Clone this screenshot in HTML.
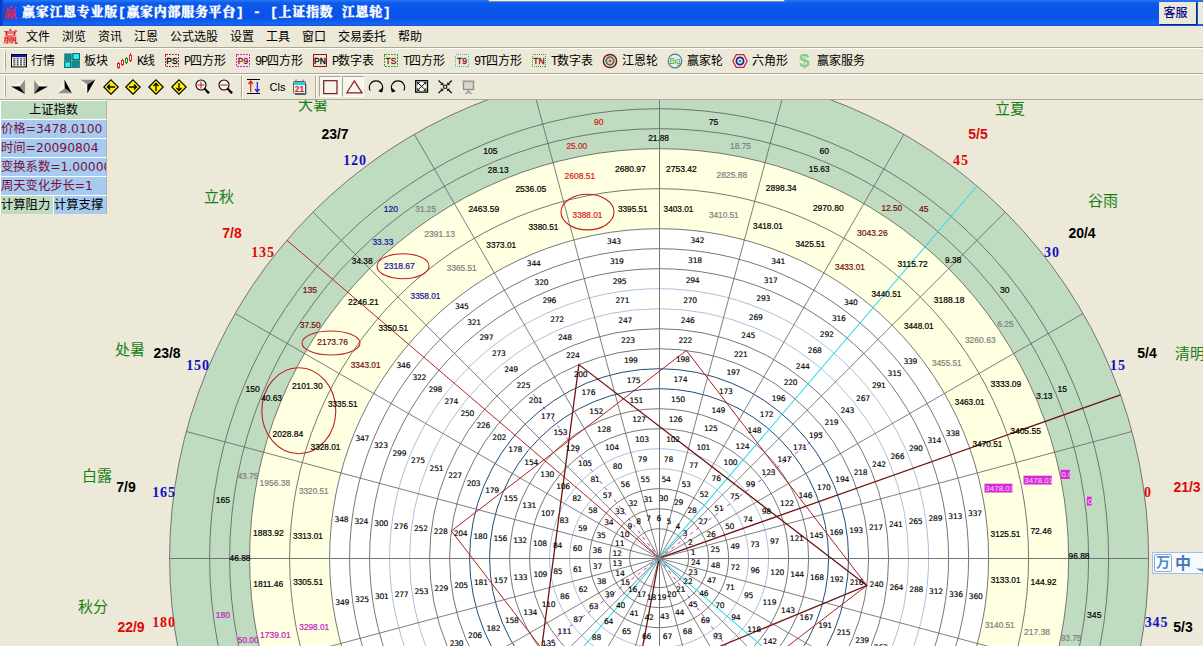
<!DOCTYPE html>
<html lang="zh-CN"><head><meta charset="utf-8"><title>赢家江恩专业版</title>
<style>
html,body{margin:0;padding:0}
body{width:1203px;height:646px;overflow:hidden;background:#ece9d8;position:relative;font-family:"Liberation Sans","Noto Sans CJK SC",sans-serif;font-size:12px;color:#000}
#wheel{position:absolute;left:0;top:100px;font-family:"Liberation Sans","Noto Sans CJK SC",sans-serif}
.abs,#ui *{position:absolute}
#ui{position:absolute;left:0;top:0;width:1203px;height:100px}
#title{left:0;top:0;width:1203px;height:26px;background:linear-gradient(#2a78f4 0,#0c5cee 3px,#0a55ea 8px,#0a52e6 18px,#1260ee 22px,#1a66f0 24px,#0f50dc 26px)}
#title .t{left:22px;top:5px;color:#fff;font-weight:900;-webkit-text-stroke:0.3px #fff;font-size:13px;line-height:15px;font-family:"Liberation Mono","Noto Serif CJK SC",serif;white-space:nowrap;letter-spacing:0.7px}
#title .ic,#menu .ic{left:3px;width:16px;height:16px;font-size:14px;line-height:16px;color:#d01830;font-family:"Liberation Serif","Noto Serif CJK SC",serif;font-weight:bold}
#tab{left:488px;top:0;width:297px;height:2px;background:#eef0f4;border:1px solid #7a8aa8;border-top:none;box-sizing:border-box;border-radius:0 0 3px 3px}
#kf{left:1159px;top:2px;width:37px;height:22px;background:#ece9d8;box-shadow:1px 1px 0 #0a2a80;color:#0a0a90;font-size:12px;line-height:22px;text-align:center;text-indent:-4px;font-weight:500}
#kf2{left:1198px;top:2px;width:8px;height:22px;background:#ece9d8}
#menu{left:0;top:26px;width:1203px;height:21px;background:#ece9d8}
#menu span{top:4px;font-size:12px;line-height:14px;white-space:nowrap}
.sep{left:0;width:1203px;height:1px}
.tb span{font-size:12px;line-height:14px;white-space:nowrap;top:5px}
#ui .tb span i{position:static;font-style:normal;font-family:"Liberation Mono",monospace;letter-spacing:-1.2px}
.grip{left:4px;width:1px;background:#fff;box-shadow:1px 0 0 #aca899}
#panel div{box-sizing:border-box;white-space:nowrap;overflow:hidden;font-size:12.3px;line-height:17px;padding-top:1px;font-family:"DejaVu Sans","Noto Sans CJK SC",sans-serif;padding-left:0}
</style></head><body>
<svg id="wheel" width="1203" height="546" viewBox="0 100 1203 546">
<circle cx="659.1" cy="558.2" r="489.5" fill="#c0dcc0"/>
<circle cx="659.1" cy="558.2" r="409.5" fill="#ffffe1"/>
<circle cx="659.1" cy="558.2" r="329.5" fill="#ffffff"/>
<g fill="none" stroke="#686868" stroke-width="0.9">
<circle cx="659.1" cy="558.2" r="29.5"/>
<circle cx="659.1" cy="558.2" r="49.5"/>
<circle cx="659.1" cy="558.2" r="69.5"/>
<circle cx="659.1" cy="558.2" r="89.5" stroke="#a9c1dd" stroke-width="1"/>
<circle cx="659.1" cy="558.2" r="109.5" stroke="#a9c1dd" stroke-width="1"/>
<circle cx="659.1" cy="558.2" r="129.5"/>
<circle cx="659.1" cy="558.2" r="149.5"/>
<circle cx="659.1" cy="558.2" r="169.5" stroke="#1f4e79" stroke-width="1"/>
<circle cx="659.1" cy="558.2" r="189.5" stroke="#1f4e79" stroke-width="1"/>
<circle cx="659.1" cy="558.2" r="209.5"/>
<circle cx="659.1" cy="558.2" r="229.5"/>
<circle cx="659.1" cy="558.2" r="249.5" stroke="#a9c1dd" stroke-width="1"/>
<circle cx="659.1" cy="558.2" r="269.5" stroke="#a9c1dd" stroke-width="1"/>
<circle cx="659.1" cy="558.2" r="289.5"/>
<circle cx="659.1" cy="558.2" r="309.5"/>
<circle cx="659.1" cy="558.2" r="329.5"/>
<circle cx="659.1" cy="558.2" r="369.5"/>
<circle cx="659.1" cy="558.2" r="409.5"/>
<circle cx="659.1" cy="558.2" r="429.5"/>
<circle cx="659.1" cy="558.2" r="449.5"/>
<circle cx="659.1" cy="558.2" r="489.5"/>
<path d="M659.1 558.2L1131.9 431.5M659.1 558.2L1083 313.5M659.1 558.2L1005.2 212.1M659.1 558.2L903.9 134.3M659.1 558.2L785.8 85.4M659.1 558.2L532.4 85.4M659.1 558.2L414.4 134.3M659.1 558.2L313 212.1M659.1 558.2L235.2 313.5M659.1 558.2L186.3 431.5M659.1 558.2L186.3 684.9M659.1 558.2L235.2 803M659.1 558.2L313 904.3M659.1 558.2L414.3 982.1M659.1 558.2L532.4 1031M659.1 558.2L785.8 1031M659.1 558.2L903.9 982.1M659.1 558.2L1005.2 904.3M659.1 558.2L1083 803M659.1 558.2L1131.9 684.9" stroke-width="0.85"/>
</g>
<path d="M169 558.5H1149M659.5 68V700" stroke="#757575" stroke-width="1" shape-rendering="crispEdges" fill="none"/>
<line x1="659.1" y1="558.2" x2="825.3" y2="430.7" stroke="#b040d0" stroke-width="1.0" stroke-dasharray="3.6 4.2"/>
<line x1="659.1" y1="558.2" x2="531.6" y2="392" stroke="#b040d0" stroke-width="1.0" stroke-dasharray="3.6 4.2"/>
<line x1="659.1" y1="558.2" x2="492.9" y2="685.7" stroke="#b040d0" stroke-width="1.0" stroke-dasharray="3.6 4.2"/>
<line x1="659.1" y1="558.2" x2="786.6" y2="724.4" stroke="#b040d0" stroke-width="1.0" stroke-dasharray="3.6 4.2"/>
<line x1="659.1" y1="558.2" x2="977" y2="186" stroke="#30dcea" stroke-width="1.05" />
<line x1="659.1" y1="558.2" x2="341.2" y2="930.4" stroke="#30dcea" stroke-width="1.05" />
<line x1="659.1" y1="558.2" x2="1031.3" y2="876.1" stroke="#30dcea" stroke-width="1.05" />
<line x1="659.1" y1="558.2" x2="1120.5" y2="394.8" stroke="#701414" stroke-width="1.3" />
<line x1="659.1" y1="558.2" x2="569.9" y2="1039.5" stroke="#701414" stroke-width="1.3" />
<line x1="659.1" y1="558.2" x2="286.9" y2="240.3" stroke="#b82424" stroke-width="1.0" />
<polygon points="866.8,585.5 686.4,350.5 451.4,530.9 631.8,765.9" fill="none" stroke="#ac2020" stroke-width="1.0"/>
<polygon points="866.8,585.5 578.9,364.6 531.6,724.4" fill="none" stroke="#701414" stroke-width="1.3"/>
<circle cx="659.1" cy="558.2" r="2.6" fill="#808080"/>
<ellipse cx="331" cy="343" rx="29" ry="12" fill="none" stroke="#c02020" stroke-width="1.1"/>
<ellipse cx="298.8" cy="410.7" rx="37" ry="43" fill="none" stroke="#c02020" stroke-width="1.1"/>
<ellipse cx="403" cy="266.2" rx="26" ry="12.5" fill="none" stroke="#c02020" stroke-width="1.1"/>
<ellipse cx="587.5" cy="212.1" rx="26.5" ry="17.8" fill="none" stroke="#c02020" stroke-width="1.1"/>
<g font-size="7.6" font-family="'DejaVu Sans','Liberation Sans',sans-serif" fill="#000" stroke="#000" stroke-width="0.15" letter-spacing="-0.25">
<text x="690.8" y="554.9">1</text>
<text x="688.1" y="545">2</text>
<text x="682.8" y="536.1">3</text>
<text x="675.5" y="528.8">4</text>
<text x="666.5" y="523.8">5</text>
<text x="656.5" y="521.2">6</text>
<text x="646.2" y="521.3">7</text>
<text x="636.3" y="524">8</text>
<text x="627.4" y="529.3">9</text>
<text x="620.1" y="536.6">10</text>
<text x="615.1" y="545.6">11</text>
<text x="612.5" y="555.6">12</text>
<text x="612.6" y="565.9">13</text>
<text x="615.3" y="575.8">14</text>
<text x="620.6" y="584.7">15</text>
<text x="627.9" y="592">16</text>
<text x="636.9" y="597">17</text>
<text x="646.9" y="599.6">18</text>
<text x="657.2" y="599.5">19</text>
<text x="667.1" y="596.8">20</text>
<text x="676" y="591.5">21</text>
<text x="683.3" y="584.2">22</text>
<text x="688.3" y="575.2">23</text>
<text x="690.9" y="565.2">24</text>
<text x="710.6" y="552.1">25</text>
<text x="706.5" y="537.1">26</text>
<text x="698.6" y="523.8">27</text>
<text x="687.5" y="512.9">28</text>
<text x="674" y="505.2">29</text>
<text x="658.9" y="501.3">30</text>
<text x="643.4" y="501.5">31</text>
<text x="628.4" y="505.6">32</text>
<text x="615.1" y="513.5">33</text>
<text x="604.2" y="524.6">34</text>
<text x="596.5" y="538.1">35</text>
<text x="592.6" y="553.2">36</text>
<text x="592.8" y="568.7">37</text>
<text x="596.9" y="583.7">38</text>
<text x="604.8" y="597">39</text>
<text x="615.9" y="607.9">40</text>
<text x="629.4" y="615.6">41</text>
<text x="644.5" y="619.5">42</text>
<text x="660" y="619.3">43</text>
<text x="675" y="615.2">44</text>
<text x="688.3" y="607.3">45</text>
<text x="699.2" y="596.2">46</text>
<text x="706.9" y="582.7">47</text>
<text x="710.8" y="567.6">48</text>
<text x="730.4" y="549.3">49</text>
<text x="724.9" y="529.3">50</text>
<text x="714.3" y="511.4">51</text>
<text x="699.5" y="496.9">52</text>
<text x="681.5" y="486.7">53</text>
<text x="661.4" y="481.5">54</text>
<text x="640.6" y="481.7">55</text>
<text x="620.6" y="487.2">56</text>
<text x="602.7" y="497.8">57</text>
<text x="588.2" y="512.6">58</text>
<text x="578" y="530.6">59</text>
<text x="572.8" y="550.7">60</text>
<text x="573" y="571.5">61</text>
<text x="578.5" y="591.5">62</text>
<text x="589.1" y="609.4">63</text>
<text x="603.9" y="623.9">64</text>
<text x="621.9" y="634.1">65</text>
<text x="642" y="639.3">66</text>
<text x="662.8" y="639.1">67</text>
<text x="682.8" y="633.6">68</text>
<text x="700.7" y="623">69</text>
<text x="715.2" y="608.2">70</text>
<text x="725.4" y="590.2">71</text>
<text x="730.6" y="570.1">72</text>
<text x="750.2" y="546.5">73</text>
<text x="743.3" y="521.5">74</text>
<text x="730.1" y="499.1">75</text>
<text x="711.6" y="480.9">76</text>
<text x="688.9" y="468.1">77</text>
<text x="663.8" y="461.6">78</text>
<text x="637.8" y="461.9">79</text>
<text x="612.8" y="468.8">80</text>
<text x="590.4" y="482">81</text>
<text x="572.2" y="500.5">82</text>
<text x="559.4" y="523.2">83</text>
<text x="552.9" y="548.3">84</text>
<text x="553.2" y="574.3">85</text>
<text x="560.1" y="599.3">86</text>
<text x="573.3" y="621.7">87</text>
<text x="591.8" y="639.9">88</text>
<text x="614.5" y="652.7">89</text>
<text x="639.6" y="659.2">90</text>
<text x="665.6" y="658.9">91</text>
<text x="690.6" y="652">92</text>
<text x="713" y="638.8">93</text>
<text x="731.2" y="620.3">94</text>
<text x="744" y="597.6">95</text>
<text x="750.5" y="572.5">96</text>
<text x="770" y="543.7">97</text>
<text x="761.7" y="513.7">98</text>
<text x="745.8" y="486.8">99</text>
<text x="723.6" y="464.9">100</text>
<text x="696.4" y="449.6">101</text>
<text x="666.2" y="441.8">102</text>
<text x="635" y="442.1">103</text>
<text x="605" y="450.4">104</text>
<text x="578.1" y="466.3">105</text>
<text x="556.2" y="488.5">106</text>
<text x="540.9" y="515.7">107</text>
<text x="533.1" y="545.9">108</text>
<text x="533.4" y="577.1">109</text>
<text x="541.7" y="607.1">110</text>
<text x="557.6" y="634">111</text>
<text x="579.8" y="655.9">112</text>
<text x="725.3" y="654.5">117</text>
<text x="747.2" y="632.3">118</text>
<text x="762.5" y="605.1">119</text>
<text x="770.3" y="574.9">120</text>
<text x="789.8" y="540.9">121</text>
<text x="780.1" y="505.8">122</text>
<text x="761.6" y="474.5">123</text>
<text x="735.6" y="449">124</text>
<text x="703.9" y="431">125</text>
<text x="668.7" y="421.9">126</text>
<text x="632.2" y="422.3">127</text>
<text x="597.1" y="432">128</text>
<text x="565.8" y="450.5">129</text>
<text x="540.3" y="476.5">130</text>
<text x="522.3" y="508.2">131</text>
<text x="513.2" y="543.4">132</text>
<text x="513.6" y="579.9">133</text>
<text x="523.3" y="615">134</text>
<text x="541.8" y="646.3">135</text>
<text x="763.1" y="644.3">142</text>
<text x="781.1" y="612.6">143</text>
<text x="790.2" y="577.4">144</text>
<text x="809.6" y="538.1">145</text>
<text x="798.5" y="498">146</text>
<text x="777.4" y="462.2">147</text>
<text x="747.6" y="433">148</text>
<text x="711.4" y="412.5">149</text>
<text x="671.1" y="402.1">150</text>
<text x="629.4" y="402.5">151</text>
<text x="589.3" y="413.6">152</text>
<text x="553.5" y="434.7">153</text>
<text x="524.3" y="464.5">154</text>
<text x="503.8" y="500.7">155</text>
<text x="493.4" y="541">156</text>
<text x="493.8" y="582.7">157</text>
<text x="504.9" y="622.8">158</text>
<text x="526" y="658.6">159</text>
<text x="779.1" y="656.3">166</text>
<text x="799.6" y="620.1">167</text>
<text x="810" y="579.8">168</text>
<text x="829.4" y="535.4">169</text>
<text x="816.9" y="490.2">170</text>
<text x="793.1" y="449.8">171</text>
<text x="759.7" y="417">172</text>
<text x="718.9" y="393.9">173</text>
<text x="673.5" y="382.2">174</text>
<text x="626.7" y="382.7">175</text>
<text x="581.5" y="395.2">176</text>
<text x="541.1" y="419">177</text>
<text x="508.3" y="452.4">178</text>
<text x="485.2" y="493.2">179</text>
<text x="473.5" y="538.6">180</text>
<text x="474" y="585.4">181</text>
<text x="486.5" y="630.6">182</text>
<text x="818.2" y="627.6">191</text>
<text x="829.9" y="582.2">192</text>
<text x="849.2" y="532.6">193</text>
<text x="835.3" y="482.4">194</text>
<text x="808.9" y="437.5">195</text>
<text x="771.7" y="401">196</text>
<text x="726.4" y="375.4">197</text>
<text x="675.9" y="362.4">198</text>
<text x="623.9" y="362.9">199</text>
<text x="573.7" y="376.8">200</text>
<text x="528.8" y="403.2">201</text>
<text x="492.3" y="440.4">202</text>
<text x="466.7" y="485.7">203</text>
<text x="453.7" y="536.2">204</text>
<text x="454.2" y="588.2">205</text>
<text x="468.1" y="638.4">206</text>
<text x="836.7" y="635.1">215</text>
<text x="849.7" y="584.6">216</text>
<text x="869.1" y="529.8">217</text>
<text x="853.7" y="474.6">218</text>
<text x="824.6" y="425.2">219</text>
<text x="783.7" y="385.1">220</text>
<text x="733.9" y="356.9">221</text>
<text x="678.4" y="342.5">222</text>
<text x="621.1" y="343">223</text>
<text x="565.9" y="358.4">224</text>
<text x="516.5" y="387.5">225</text>
<text x="476.4" y="428.4">226</text>
<text x="448.2" y="478.2">227</text>
<text x="433.8" y="533.7">228</text>
<text x="434.3" y="591">229</text>
<text x="449.7" y="646.2">230</text>
<text x="855.2" y="642.6">239</text>
<text x="869.6" y="587.1">240</text>
<text x="888.9" y="527">241</text>
<text x="872.1" y="466.7">242</text>
<text x="840.4" y="412.9">243</text>
<text x="795.8" y="369.1">244</text>
<text x="741.3" y="338.3">245</text>
<text x="680.8" y="322.7">246</text>
<text x="618.3" y="323.2">247</text>
<text x="558" y="340">248</text>
<text x="504.2" y="371.7">249</text>
<text x="460.4" y="416.3">250</text>
<text x="429.6" y="470.8">251</text>
<text x="414" y="531.3">252</text>
<text x="414.5" y="593.8">253</text>
<text x="431.3" y="654.1">254</text>
<text x="873.8" y="650">263</text>
<text x="889.4" y="589.5">264</text>
<text x="908.7" y="524.2">265</text>
<text x="890.5" y="458.9">266</text>
<text x="856.1" y="400.6">267</text>
<text x="807.8" y="353.1">268</text>
<text x="748.8" y="319.8">269</text>
<text x="683.2" y="302.8">270</text>
<text x="615.5" y="303.4">271</text>
<text x="550.2" y="321.6">272</text>
<text x="491.9" y="356">273</text>
<text x="444.4" y="404.3">274</text>
<text x="411.1" y="463.3">275</text>
<text x="394.1" y="528.9">276</text>
<text x="394.7" y="596.6">277</text>
<text x="892.3" y="657.5">287</text>
<text x="909.3" y="591.9">288</text>
<text x="928.5" y="521.4">289</text>
<text x="908.9" y="451.1">290</text>
<text x="871.9" y="388.2">291</text>
<text x="819.8" y="337.1">292</text>
<text x="756.3" y="301.2">293</text>
<text x="685.7" y="283">294</text>
<text x="612.7" y="283.6">295</text>
<text x="542.4" y="303.2">296</text>
<text x="479.5" y="340.2">297</text>
<text x="428.4" y="392.3">298</text>
<text x="392.5" y="455.8">299</text>
<text x="374.3" y="526.4">300</text>
<text x="374.9" y="599.4">301</text>
<text x="929.1" y="594.4">312</text>
<text x="948.3" y="518.6">313</text>
<text x="927.4" y="443.3">314</text>
<text x="887.6" y="375.9">315</text>
<text x="831.9" y="321.1">316</text>
<text x="763.8" y="282.7">317</text>
<text x="688.1" y="263.1">318</text>
<text x="609.9" y="263.8">319</text>
<text x="534.6" y="284.7">320</text>
<text x="467.2" y="324.5">321</text>
<text x="412.4" y="380.2">322</text>
<text x="374" y="448.3">323</text>
<text x="354.4" y="524">324</text>
<text x="355.1" y="602.2">325</text>
<text x="949" y="596.8">336</text>
<text x="968.1" y="515.8">337</text>
<text x="945.8" y="435.5">338</text>
<text x="903.4" y="363.6">339</text>
<text x="843.9" y="305.2">340</text>
<text x="771.3" y="264.1">341</text>
<text x="690.5" y="243.3">342</text>
<text x="607.1" y="244">343</text>
<text x="526.8" y="266.3">344</text>
<text x="454.9" y="308.7">345</text>
<text x="396.5" y="368.2">346</text>
<text x="355.4" y="440.8">347</text>
<text x="334.6" y="521.6">348</text>
<text x="335.3" y="605">349</text>
<text x="968.8" y="599.2">360</text>
</g>
<g font-size="8" fill="currentColor" stroke="currentColor" stroke-width="0.2">
<text x="972.5" y="447.3" font-size="8.25" color="#000">3470.51</text>
<text x="1010.2" y="434.1" font-size="8.5" color="#000">3405.55</text>
<text x="954.8" y="405.1" font-size="8.25" color="#000">3463.01</text>
<text x="990.6" y="387.1" font-size="8.5" color="#000">3333.09</text>
<text x="931.9" y="365.6" font-size="8.25" color="#808080">3455.51</text>
<text x="964.9" y="343.1" font-size="8.5" color="#808080">3260.63</text>
<text x="903.9" y="329.4" font-size="8.25" color="#000">3448.01</text>
<text x="933.8" y="302.8" font-size="8.5" color="#000">3188.18</text>
<text x="871.5" y="297.2" font-size="8.25" color="#000">3440.51</text>
<text x="897.6" y="266.9" font-size="8.5" color="#000">3115.72</text>
<text x="835.1" y="269.5" font-size="8.25" color="#701010">3433.01</text>
<text x="857.1" y="236" font-size="8.5" color="#701010">3043.26</text>
<text x="795.4" y="246.8" font-size="8.25" color="#000">3425.51</text>
<text x="812.9" y="210.6" font-size="8.5" color="#000">2970.80</text>
<text x="753.1" y="229.4" font-size="8.25" color="#000">3418.01</text>
<text x="765.8" y="191.3" font-size="8.5" color="#000">2898.34</text>
<text x="708.9" y="217.7" font-size="8.25" color="#808080">3410.51</text>
<text x="716.5" y="178.3" font-size="8.5" color="#808080">2825.88</text>
<text x="663.6" y="211.9" font-size="8.25" color="#000">3403.01</text>
<text x="666" y="171.8" font-size="8.5" color="#000">2753.42</text>
<text x="617.9" y="212.1" font-size="8.25" color="#000">3395.51</text>
<text x="615" y="172" font-size="8.5" color="#000">2680.97</text>
<text x="572.6" y="218.2" font-size="8.25" color="#d81a1a">3388.01</text>
<text x="564.5" y="178.8" font-size="8.5" color="#d81a1a">2608.51</text>
<text x="528.5" y="230.2" font-size="8.25" color="#000">3380.51</text>
<text x="515.4" y="192.1" font-size="8.5" color="#000">2536.05</text>
<text x="486.3" y="247.8" font-size="8.25" color="#000">3373.01</text>
<text x="468.4" y="211.8" font-size="8.5" color="#000">2463.59</text>
<text x="446.8" y="270.8" font-size="8.25" color="#808080">3365.51</text>
<text x="424.3" y="237.4" font-size="8.5" color="#808080">2391.13</text>
<text x="410.6" y="298.7" font-size="8.25" color="#12129c">3358.01</text>
<text x="384" y="268.6" font-size="8.5" color="#12129c">2318.67</text>
<text x="378.4" y="331.2" font-size="8.25" color="#000">3350.51</text>
<text x="348.1" y="304.7" font-size="8.5" color="#000">2246.21</text>
<text x="350.7" y="367.5" font-size="8.25" color="#701010">3343.01</text>
<text x="317.2" y="345.2" font-size="8.5" color="#701010">2173.76</text>
<text x="327.9" y="407.2" font-size="8.25" color="#000">3335.51</text>
<text x="291.9" y="389.4" font-size="8.5" color="#000">2101.30</text>
<text x="310.6" y="449.5" font-size="8.25" color="#000">3328.01</text>
<text x="272.6" y="436.6" font-size="8.5" color="#000">2028.84</text>
<text x="298.9" y="493.7" font-size="8.25" color="#808080">3320.51</text>
<text x="259.5" y="485.8" font-size="8.5" color="#808080">1956.38</text>
<text x="293.1" y="539" font-size="8.25" color="#000">3313.01</text>
<text x="253.1" y="536.4" font-size="8.5" color="#000">1883.92</text>
<text x="293.2" y="584.8" font-size="8.25" color="#000">3305.51</text>
<text x="253.2" y="587.3" font-size="8.5" color="#000">1811.46</text>
<text x="299.3" y="630.1" font-size="8.25" color="#c020c0">3298.01</text>
<text x="260" y="637.8" font-size="8.5" color="#c020c0">1739.01</text>
<text x="984.9" y="627.8" font-size="8.25" color="#808080">3140.51</text>
<text x="1024.1" y="635.3" font-size="8.5" color="#808080">217.38</text>
<text x="990.7" y="582.5" font-size="8.25" color="#000">3133.01</text>
<text x="1030.5" y="584.7" font-size="8.5" color="#000">144.92</text>
<text x="990.6" y="536.7" font-size="8.25" color="#000">3125.51</text>
<text x="1030.4" y="533.8" font-size="8.5" color="#000">72.46</text>
<text x="1036.3" y="399" font-size="8.3" color="#000">3.13</text>
<text x="997.4" y="326.5" font-size="8.3" color="#808080">6.25</text>
<text x="945.1" y="263" font-size="8.3" color="#000">9.38</text>
<text x="881.4" y="211" font-size="8.3" color="#701010">12.50</text>
<text x="808.8" y="172.4" font-size="8.3" color="#000">15.63</text>
<text x="730.1" y="148.7" font-size="8.3" color="#808080">18.75</text>
<text x="648.2" y="140.8" font-size="8.3" color="#000">21.88</text>
<text x="566.4" y="149" font-size="8.3" color="#d81a1a">25.00</text>
<text x="487.8" y="173.1" font-size="8.3" color="#000">28.13</text>
<text x="415.3" y="212" font-size="8.3" color="#808080">31.25</text>
<text x="351.8" y="264.3" font-size="8.3" color="#000">34.38</text>
<text x="299.8" y="328" font-size="8.3" color="#701010">37.50</text>
<text x="261.2" y="400.6" font-size="8.3" color="#000">40.63</text>
<text x="237.5" y="479.3" font-size="8.3" color="#808080">43.75</text>
<text x="229.6" y="561.2" font-size="8.3" color="#000">46.88</text>
<text x="237.8" y="643" font-size="8.3" color="#c020c0">50.00</text>
<text x="1060.7" y="641.3" font-size="8.3" color="#808080">93.75</text>
<text x="1068.6" y="559.4" font-size="8.3" color="#000">96.88</text>
<text x="372.5" y="244.9" font-size="8.3" color="#12129c">33.33</text>
<text x="1057.4" y="392.1" font-size="8.6" color="#000">15</text>
<text x="1000.1" y="292.7" font-size="8.6" color="#000">30</text>
<text x="919" y="211.6" font-size="8.6" color="#701010">45</text>
<text x="819.6" y="154.3" font-size="8.6" color="#000">60</text>
<text x="708.8" y="124.6" font-size="8.6" color="#000">75</text>
<text x="594" y="124.6" font-size="8.6" color="#d81a1a">90</text>
<text x="483.2" y="154.3" font-size="8.6" color="#000">105</text>
<text x="383.8" y="211.6" font-size="8.6" color="#12129c">120</text>
<text x="302.7" y="292.7" font-size="8.6" color="#701010">135</text>
<text x="245.4" y="392.1" font-size="8.6" color="#000">150</text>
<text x="215.7" y="502.9" font-size="8.6" color="#000">165</text>
<text x="215.7" y="617.7" font-size="8.6" color="#c020c0">180</text>
<text x="1087.1" y="617.7" font-size="8.6" color="#000">345</text>
</g>
<svg x="984.3" y="483.4" width="28.4" height="9.3" overflow="hidden"><rect width="28.4" height="9.3" fill="#d828d8"/><text x="1" y="7.300000000000001" font-size="8" fill="#ffd8ff">3478.01</text></svg>
<svg x="1023.3" y="475.4" width="28.6" height="9.3" overflow="hidden"><rect width="28.6" height="9.3" fill="#d828d8"/><text x="1" y="7.300000000000001" font-size="8" fill="#ffd8ff">3478.01</text></svg>
<svg x="1060.4" y="469.6" width="9.5" height="9.4" overflow="hidden"><rect width="9.5" height="9.4" fill="#d828d8"/><text x="1" y="7.4" font-size="8" fill="#ffd8ff">0.00</text></svg>
<svg x="1086.8" y="496.4" width="5" height="9.3" overflow="hidden"><rect width="5" height="9.3" fill="#d828d8"/><text x="1" y="7.300000000000001" font-size="8" fill="#ffd8ff">0</text></svg>
<g font-family="'Liberation Serif',serif" font-weight="bold" font-size="14" text-anchor="middle" letter-spacing="0.9">
<text x="355" y="164.8" fill="#1010c0">120</text>
<text x="263" y="256.8" fill="#dc0808">135</text>
<text x="198" y="369.8" fill="#1010c0">150</text>
<text x="164" y="496.8" fill="#1010c0">165</text>
<text x="164" y="626.8" fill="#dc0808">180</text>
<text x="961" y="164.8" fill="#dc0808">45</text>
<text x="1052" y="256.8" fill="#1010c0">30</text>
<text x="1118" y="369.8" fill="#1010c0">15</text>
<text x="1148" y="496.8" fill="#dc0808">0</text>
<text x="1156.5" y="626.8" fill="#1010c0">345</text>
</g>
<g font-weight="bold" font-size="14" text-anchor="middle" fill="currentColor">
<text x="335" y="139" color="#000">23/7</text>
<text x="232" y="238" color="#dc0808">7/8</text>
<text x="167" y="358" color="#000">23/8</text>
<text x="126" y="492" color="#000">7/9</text>
<text x="131" y="632" color="#dc0808">22/9</text>
<text x="978" y="139" color="#dc0808">5/5</text>
<text x="1082" y="238" color="#000">20/4</text>
<text x="1147" y="358" color="#000">5/4</text>
<text x="1187" y="492" color="#dc0808">21/3</text>
<text x="1183" y="632" color="#000">5/3</text>
</g>
<g font-size="15" text-anchor="middle" fill="#168016" font-family="'Liberation Sans','Noto Sans CJK SC',sans-serif">
<text x="313" y="109.7">大暑</text>
<text x="219" y="201.7">立秋</text>
<text x="130" y="354.7">处暑</text>
<text x="97" y="480.7">白露</text>
<text x="93" y="611.7">秋分</text>
<text x="1010" y="113.7">立夏</text>
<text x="1103" y="205.7">谷雨</text>
<text x="1190" y="358.7">清明</text>
</g>
</svg>
<div id="ui">
<div id="title"><span class="ic" style="top:5px;left:4px;font-size:13px;color:#e8244c;font-weight:900">赢</span><div style="left:0;top:0;width:3px;height:26px;background:linear-gradient(90deg,#0838b8,#0a4ad8)"></div><span class="t">赢家江恩专业版[赢家内部服务平台] - [上证指数 江恩轮]</span>
<div id="tab"></div><div id="kf">客服</div><div id="kf2"></div></div>
<div id="menu"><span class="ic" style="top:3px;font-size:15px;color:#e01828">赢</span>
<span style="left:26px">文件</span><span style="left:62px">浏览</span><span style="left:98px">资讯</span><span style="left:134px">江恩</span><span style="left:170px">公式选股</span><span style="left:230px">设置</span><span style="left:266px">工具</span><span style="left:302px">窗口</span><span style="left:338px">交易委托</span><span style="left:398px">帮助</span></div>
<div class="sep" style="top:47px;background:#aca899"></div><div class="sep" style="top:48px;background:#fff"></div>
<div class="tb" id="tb1" style="left:0;top:49px;width:1203px;height:24px">
<div class="grip" style="top:2px;height:20px"></div>
<svg style="left:11px;top:5px" width="16" height="14" viewBox="0 0 16 14"><rect x="0.5" y="0.5" width="15" height="12.4" fill="#fff" stroke="#000"/><rect x="1" y="1" width="14" height="2.2" fill="#1414a8"/><path d="M2.3 4.9H14.6M2.3 6.9H14.6M2.3 8.9H14.6M2.3 10.9H14.6" stroke="#000" stroke-width="1" stroke-dasharray="2.1 1.25" fill="none"/></svg>
<span style="left:31px">行情</span>
<svg style="left:64px;top:4px" width="16" height="15" viewBox="0 0 16 15"><rect x="0" y="0.3" width="16" height="15" fill="#38b4bc"/><rect x="1" y="1.2" width="6" height="6" fill="#1e8686" stroke="#0c5a5a" stroke-width="0.8" stroke-dasharray="1 1"/><rect x="9" y="0.6" width="6.4" height="6" fill="#28f0f4" stroke="#0c5a5a" stroke-width="0.9"/><rect x="0.8" y="8.8" width="5.8" height="5.8" fill="#28f0f4" stroke="#0c5a5a" stroke-width="0.9"/><rect x="8.6" y="8.2" width="6.6" height="6.4" fill="#1e8686" stroke="#0c5a5a" stroke-width="0.8" stroke-dasharray="1 1"/></svg>
<span style="left:84px">板块</span>
<svg style="left:116px;top:4px" width="17" height="16" viewBox="0 0 17 16"><g fill="#fff" stroke-width="1"><path d="M2.5 9V16M6.5 6V13M14.5 0V9" stroke="#e02020"/><path d="M10.5 4V11" stroke="#209020"/><rect x="1.5" y="10.5" width="2" height="4" stroke="#e02020"/><rect x="5.5" y="7.5" width="2" height="4" stroke="#e02020"/><rect x="9.5" y="5.5" width="2" height="4" stroke="#209020"/><rect x="13.5" y="2.5" width="2" height="5" stroke="#e02020"/></g></svg>
<span style="left:137px"><i>K</i>线</span>
<svg style="left:165px;top:5px" width="14" height="13" viewBox="0 0 14 13"><rect x="0.5" y="0.5" width="13" height="12" fill="none" stroke="#c02020" stroke-width="1.3" shape-rendering="crispEdges" stroke-dasharray="2 1"/><text x="7" y="10" font-size="8.5" font-family="'Liberation Sans',sans-serif" text-anchor="middle" fill="#000" stroke="#000" stroke-width="0.3">PS</text></svg>
<span style="left:184px"><i>P</i>四方形</span>
<svg style="left:236px;top:5px" width="14" height="13" viewBox="0 0 14 13"><rect x="0.5" y="0.5" width="13" height="12" fill="none" stroke="#d020d0" stroke-width="1.3" shape-rendering="crispEdges" stroke-dasharray="2 1"/><text x="7" y="10" font-size="8.5" font-family="'Liberation Sans',sans-serif" text-anchor="middle" fill="#801010" stroke="#801010" stroke-width="0.3">P9</text></svg>
<span style="left:255px"><i>9P</i>四方形</span>
<svg style="left:313px;top:5px" width="14" height="13" viewBox="0 0 14 13"><rect x="0.5" y="0.5" width="13" height="12" fill="none" stroke="#a01010" stroke-width="1.3" shape-rendering="crispEdges"/><text x="7" y="10" font-size="8.5" font-family="'Liberation Sans',sans-serif" text-anchor="middle" fill="#000" stroke="#000" stroke-width="0.3">PN</text></svg>
<span style="left:332px"><i>P</i>数字表</span>
<svg style="left:384px;top:5px" width="14" height="13" viewBox="0 0 14 13"><rect x="0.5" y="0.5" width="13" height="12" fill="none" stroke="#20b020" stroke-width="1.3" shape-rendering="crispEdges" stroke-dasharray="2 1"/><text x="7" y="10" font-size="8.5" font-family="'Liberation Sans',sans-serif" text-anchor="middle" fill="#801010" stroke="#801010" stroke-width="0.3">TS</text></svg>
<span style="left:403px"><i>T</i>四方形</span>
<svg style="left:455px;top:5px" width="14" height="13" viewBox="0 0 14 13"><rect x="0.5" y="0.5" width="13" height="12" fill="none" stroke="#20c8e0" stroke-width="1.3" shape-rendering="crispEdges" stroke-dasharray="1 1"/><text x="7" y="10" font-size="8.5" font-family="'Liberation Sans',sans-serif" text-anchor="middle" fill="#801010" stroke="#801010" stroke-width="0.3">T9</text></svg>
<span style="left:474px"><i>9T</i>四方形</span>
<svg style="left:532px;top:5px" width="14" height="13" viewBox="0 0 14 13"><rect x="0.5" y="0.5" width="13" height="12" fill="none" stroke="#20b020" stroke-width="1.3" shape-rendering="crispEdges" stroke-dasharray="1 1"/><text x="7" y="10" font-size="8.5" font-family="'Liberation Sans',sans-serif" text-anchor="middle" fill="#801010" stroke="#801010" stroke-width="0.3">TN</text></svg>
<span style="left:551px"><i>T</i>数字表</span>
<svg style="left:601.5px;top:3.5px" width="16" height="16" viewBox="0 0 16 16"><circle cx="8" cy="8" r="6.6" fill="#f0e8e0" stroke="#801818" stroke-width="1.5"/><circle cx="8" cy="8" r="3.8" fill="#e8d8d0" stroke="#2e7d4a" stroke-width="1.8"/><circle cx="8" cy="8" r="1.4" fill="#e04040"/></svg>
<span style="left:622px">江恩轮</span>
<svg style="left:666.7px;top:3.5px" width="16" height="16" viewBox="0 0 16 16"><circle cx="8" cy="8" r="6.8" fill="#e8f0e8" stroke="#4a7a9a" stroke-width="1.2"/><text x="8" y="11" font-size="8.5" text-anchor="middle" fill="#30a030" font-family="'Liberation Sans',sans-serif" textLength="11" lengthAdjust="spacingAndGlyphs">Big</text></svg>
<span style="left:687px">赢家轮</span>
<svg style="left:732px;top:3.6000000000000014px" width="16" height="16" viewBox="0 0 16 16"><polygon points="0.8,8 4.3,1.6 11.7,1.6 15.2,8 11.7,14.4 4.3,14.4" fill="#f4ece8" stroke="#d02020" stroke-width="1.2"/><circle cx="8" cy="8" r="3.6" fill="#e0f0e0" stroke="#1020a0" stroke-width="1.8"/><circle cx="8" cy="8" r="1.3" fill="#30a030"/></svg>
<span style="left:752px">六角形</span>
<span style="left:799px;top:1px;font-size:19px;line-height:22px;font-weight:bold;color:#8cca8c;font-family:'Liberation Sans',sans-serif">$</span>
<span style="left:817px">赢家服务</span>
</div>
<div class="sep" style="top:73px;background:#aca899"></div><div class="sep" style="top:74px;background:#fff"></div>
<div class="tb" id="tb2" style="left:0;top:75px;width:1203px;height:24px">
<div class="grip" style="top:2px;height:20px"></div>
<svg style="left:10px;top:4px" width="16" height="16" viewBox="0 0 16 16"><polygon points="1,7.5 15,0.7 9.6,7.5" fill="#f4f3ea"/><polygon points="15,0.7 15,15 9.6,7.5" fill="#909090"/><polygon points="1,7.5 9.6,7.5 15,15" fill="#000"/></svg>
<svg style="left:33px;top:4px" width="16" height="16" viewBox="0 0 16 16"><polygon points="15,7.5 1.1,0.7 6.2,7.5" fill="#f4f3ea"/><polygon points="1.1,0.7 1.1,15 6.2,7.5" fill="#909090"/><polygon points="15,7.5 6.2,7.5 1.1,15" fill="#000"/></svg>
<svg style="left:57px;top:3.5px" width="16" height="16" viewBox="0 0 16 16"><polygon points="7.4,0.5 0.8,14.2 7.8,9.2" fill="#f4f3ea"/><polygon points="0.8,14.2 14.9,14.2 7.8,9.2" fill="#909090"/><polygon points="7.4,0.5 7.8,9.2 14.9,14.2" fill="#000"/></svg>
<svg style="left:80px;top:3.5px" width="16" height="16" viewBox="0 0 16 16"><polygon points="7.3,14.5 0.6,0.7 7.3,5.5" fill="#f4f3ea"/><polygon points="0.6,0.7 15.2,0.7 7.3,5.5" fill="#909090"/><polygon points="7.3,14.5 7.3,5.5 15.2,0.7" fill="#000"/></svg>
<svg style="left:102.6px;top:3.5999999999999943px" width="16" height="16" viewBox="0 0 16 16"><polygon points="8,0.8 15.2,8 8,15.2 0.8,8" fill="#fff000" stroke="#000" stroke-width="1.2"/><path d="M12 8H4.5M7 5.5L4.5 8L7 10.5" fill="none" stroke="#000" stroke-width="1.3"/></svg>
<svg style="left:125.4px;top:3.5999999999999943px" width="16" height="16" viewBox="0 0 16 16"><polygon points="8,0.8 15.2,8 8,15.2 0.8,8" fill="#fff000" stroke="#000" stroke-width="1.2"/><path d="M4 8H11.5M9 5.5L11.5 8L9 10.5" fill="none" stroke="#000" stroke-width="1.3"/></svg>
<svg style="left:148.4px;top:3.5999999999999943px" width="16" height="16" viewBox="0 0 16 16"><polygon points="8,0.8 15.2,8 8,15.2 0.8,8" fill="#fff000" stroke="#000" stroke-width="1.2"/><path d="M8 12V4.5M5.5 7L8 4.5L10.5 7" fill="none" stroke="#000" stroke-width="1.3"/></svg>
<svg style="left:171.4px;top:3.5999999999999943px" width="16" height="16" viewBox="0 0 16 16"><polygon points="8,0.8 15.2,8 8,15.2 0.8,8" fill="#fff000" stroke="#000" stroke-width="1.2"/><path d="M8 4V11.5M5.5 9L8 11.5L10.5 9" fill="none" stroke="#000" stroke-width="1.3"/></svg>
<svg style="left:195.2px;top:3.5999999999999943px" width="15" height="15" viewBox="0 0 15 15"><circle cx="6" cy="6" r="5" fill="#f4f2e8" stroke="#000" stroke-width="1.1"/><path d="M2.6 6H9.4M6 2.6V9.4" stroke="#e02020" stroke-width="1.1"/><path d="M9.5 9.5L13 13.2" stroke="#000" stroke-width="2"/><circle cx="13.2" cy="13.4" r="1.3" fill="#000"/></svg>
<svg style="left:218.1px;top:3.5999999999999943px" width="15" height="15" viewBox="0 0 15 15"><circle cx="6" cy="6" r="5" fill="#f4f2e8" stroke="#000" stroke-width="1.1"/><path d="M2.6 6H9.4" stroke="#e02020" stroke-width="1.1"/><path d="M9.5 9.5L13 13.2" stroke="#000" stroke-width="2"/><circle cx="13.2" cy="13.4" r="1.3" fill="#000"/></svg>
<div style="left:241px;top:1px;width:1px;height:22px;background:#aca899;box-shadow:1px 0 0 #fff"></div>
<svg style="left:247px;top:3.700000000000003px" width="14" height="15" viewBox="0 0 14 15"><path d="M0 0.5H13M0 14.5H13" stroke="#000" stroke-width="1.2"/><path d="M3.7 13V2.5M1.5 5L3.7 2L5.9 5" stroke="#e02020" stroke-width="1.3" fill="none"/><path d="M10.3 3V12.5M8.1 10L10.3 13L12.5 10" stroke="#2030e0" stroke-width="1.3" fill="none"/></svg>
<span style="left:269.5px;top:5px;font-size:11px;font-family:'Liberation Sans',sans-serif">Cls</span>
<svg style="left:293px;top:4px" width="14" height="16" viewBox="0 0 14 16"><rect x="0.5" y="2.5" width="12" height="12" rx="1" fill="#f0f0f0" stroke="#606060"/><rect x="1" y="3" width="11" height="3" fill="#30c8e0"/><path d="M3 0.5V3M10 0.5V3" stroke="#606060"/><path d="M12.8 5V15.3H2" stroke="#404040" stroke-width="1" fill="none"/><text x="6.5" y="13.3" font-size="8.5" text-anchor="middle" fill="#d02020" font-weight="bold" font-family="'Liberation Sans',sans-serif">21</text></svg>
<div style="left:315px;top:1px;width:1px;height:22px;background:#aca899;box-shadow:1px 0 0 #fff"></div>
<div style="left:319px;top:1px;width:22px;height:21px;background:#f6f5ee;border:1px solid #fff;border-top-color:#aca899;border-left-color:#aca899;box-sizing:border-box"></div>
<div style="left:342px;top:1px;width:22px;height:21px;background:#f6f5ee;border:1px solid #fff;border-top-color:#aca899;border-left-color:#aca899;box-sizing:border-box"></div>
<svg style="left:322.6px;top:4.599999999999994px" width="15" height="15" viewBox="0 0 15 15"><rect x="0.7" y="0.7" width="13.3" height="12.9" fill="none" stroke="#7a1a1a" stroke-width="1.2"/></svg>
<svg style="left:345.6px;top:4.599999999999994px" width="17" height="15" viewBox="0 0 17 15"><polygon points="8.3,0.9 16,12.9 0.7,12.9" fill="none" stroke="#8a1a1a" stroke-width="1.2"/></svg>
<svg style="left:367.5px;top:3.5px" width="16" height="16" viewBox="0 0 16 16"><path d="M2.2 11.6A6.6 6.6 0 1 1 13.8 11.6" fill="none" stroke="#000" stroke-width="1.1"/><polygon points="14.6,8.6 14.3,13.4 10.2,12.2" fill="#000"/></svg>
<svg style="left:390.1px;top:3.5px" width="16" height="16" viewBox="0 0 16 16"><path d="M2.2 11.6A6.6 6.6 0 1 1 13.8 11.6" fill="none" stroke="#000" stroke-width="1.1"/><polygon points="1.4,8.6 1.7,13.4 5.8,12.2" fill="#000"/></svg>
<svg style="left:415px;top:5.200000000000003px" width="14" height="13" viewBox="0 0 14 13"><rect x="0.7" y="0.7" width="11.8" height="11.4" fill="#f8f8f4" stroke="#000" stroke-width="1.3"/><path d="M2.8 2.8L10.4 10M10.4 2.8L2.8 10" stroke="#000" stroke-width="0.9"/><path d="M2.4 4.6V2.4H4.6M8.6 2.4H10.8V4.6M2.4 8.2V10.4H4.6M8.6 10.4H10.8V8.2" fill="none" stroke="#000" stroke-width="0.9"/></svg>
<svg style="left:438px;top:4.799999999999997px" width="15" height="14" viewBox="0 0 15 14"><rect x="5.7" y="5.2" width="3" height="3" fill="#fff" stroke="#000" stroke-width="1"/><path d="M0.5 0.5L4.6 4.3M13.8 0.5L9.8 4.3M0.5 13L4.6 9.4M13.8 13L9.8 9.4" stroke="#000" stroke-width="1.1"/><path d="M2.6 4.6H4.8V2.6M11.8 4.6H9.6V2.6M2.6 9.2H4.8V11.2M11.8 9.2H9.6V11.2" fill="none" stroke="#000" stroke-width="0.9"/></svg>
<svg style="left:461.5px;top:5px" width="14" height="15" viewBox="0 0 14 15"><rect x="1.5" y="1.5" width="10" height="8" fill="#d8d8d0" stroke="#909088" stroke-width="1.3"/><path d="M0.5 1.3H12.5" stroke="#a0a098" stroke-width="1.6"/><path d="M6.5 9.5V12M6.5 11.5L3.5 14M6.5 11.5L9.5 14" stroke="#909088" stroke-width="1.3" fill="none"/></svg>
</div>
<div class="sep" style="top:99px;background:#aca899"></div>
</div>
<div id="panel" class="abs" style="left:0;top:100px;width:107px;height:114px">
<div class="abs" style="left:0;top:0;width:107px;height:19px;background:#c0dcc0;border-top:1px solid #fff;border-left:1px solid #fff;border-right:1px solid #b4b2a4;text-align:center;color:#000">上证指数</div>
<div class="abs" style="left:0;top:19px;width:107px;height:19px;background:#a6caf0;border-top:1px solid #fff;border-left:1px solid #fff;border-right:1px solid #b4b2a4;color:#7a1038">价格=3478.0100</div>
<div class="abs" style="left:0;top:38px;width:107px;height:19px;background:#a6caf0;border-top:1px solid #fff;border-left:1px solid #fff;border-right:1px solid #b4b2a4;color:#7a1038">时间=20090804</div>
<div class="abs" style="left:0;top:57px;width:107px;height:19px;background:#a6caf0;border-top:1px solid #fff;border-left:1px solid #fff;border-right:1px solid #b4b2a4;color:#7a1038">变换系数=1.00000</div>
<div class="abs" style="left:0;top:76px;width:107px;height:19px;background:#a6caf0;border-top:1px solid #fff;border-left:1px solid #fff;border-right:1px solid #b4b2a4;color:#7a1038">周天变化步长=1</div>
<div class="abs" style="left:0;top:95px;width:53px;height:19px;background:#c0dcc0;border-top:1px solid #fff;border-left:1px solid #fff;color:#000">计算阻力</div>
<div class="abs" style="left:53px;top:95px;width:54px;height:19px;background:#a6caf0;border-top:1px solid #fff;border-left:1px solid #fff;border-right:1px solid #b4b2a4;color:#000">计算支撑</div>
</div>
<div id="ime" class="abs" style="left:1152px;top:552px;width:60px;height:22px;background:#f6f9fd;border:1px solid #9fc0e6;box-sizing:border-box">
<div class="abs" style="left:1px;top:1px;width:18px;height:18px;border:1px solid #94a8c4;border-radius:2px;box-sizing:border-box;background:#fbfdff;color:#4a8cd6;font-size:14px;line-height:15px;text-align:center;font-weight:bold">万</div>
<div class="abs" style="left:22px;top:1px;font-size:16px;line-height:19px;color:#4a7ab4;font-weight:bold">中</div>
<svg class="abs" style="left:42px;top:12px" width="16" height="8" viewBox="0 0 16 8"><path d="M0.5 2.5Q6 6 16 0V6.5Q6 8.5 0.5 2.5Z" fill="#4a7ab4"/></svg>
</div>
</body></html>
